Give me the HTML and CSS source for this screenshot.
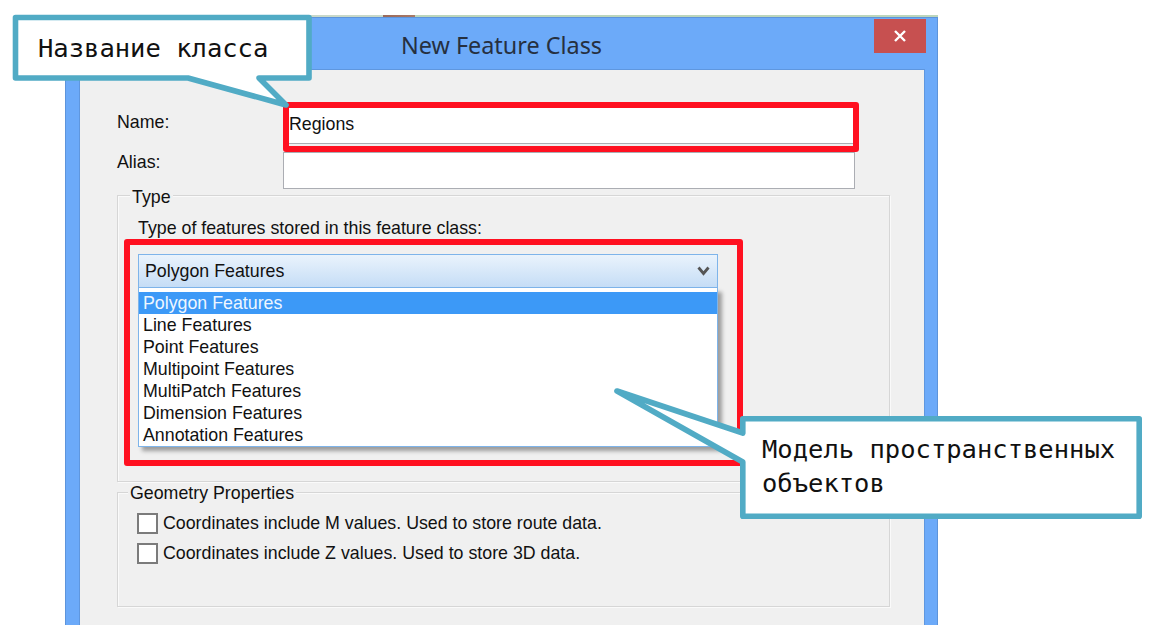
FILE: index.html
```html
<!DOCTYPE html>
<html lang="ru">
<head>
<meta charset="utf-8">
<title>New Feature Class</title>
<link rel="stylesheet" href="styles.css">
</head>
<body>
<div class="stage">
  <div class="backdrop-strip"></div>
  <div class="window">
    <div class="titlebar">
      <span class="title">New Feature Class</span>
      <div class="close">
        <svg width="14" height="12" viewBox="0 0 14 12"><path d="M2 1 L12 11 M12 1 L2 11" stroke="#fff" stroke-width="2.4" fill="none"/></svg>
      </div>
    </div>
    <div class="client">
      <div class="field-row">
        <span class="field-label">Name:</span>
        <div class="textbox">Regions</div>
      </div>
      <div class="field-row field-row--alias">
        <span class="field-label field-label--alias">Alias:</span>
        <div class="textbox"></div>
      </div>

      <div class="group group--type">
        <div class="legend legend--type">Type</div>
        <div class="group-caption">Type of features stored in this feature class:</div>
        <div class="combo">
          <span class="combo-value">Polygon Features</span>
          <svg class="chevron" width="13" height="10" viewBox="0 0 13 10"><polyline points="1.5,1.5 6.5,7.5 11.5,1.5" fill="none" stroke="#555" stroke-width="2.8"/></svg>
          <ul class="combo-list">
            <li class="combo-item combo-item--selected">Polygon Features</li>
            <li class="combo-item">Line Features</li>
            <li class="combo-item">Point Features</li>
            <li class="combo-item">Multipoint Features</li>
            <li class="combo-item">MultiPatch Features</li>
            <li class="combo-item">Dimension Features</li>
            <li class="combo-item">Annotation Features</li>
          </ul>
        </div>
      </div>

      <div class="group group--geom">
        <div class="legend legend--geom">Geometry Properties</div>
        <div class="check-list">
          <div class="check-row"><span class="checkbox"></span>Coordinates include M values. Used to store route data.</div>
          <div class="check-row"><span class="checkbox"></span>Coordinates include Z values. Used to store 3D data.</div>
        </div>
      </div>
    </div>
  </div>

  <div class="highlight highlight--name"></div>
  <div class="highlight highlight--type"></div>

  <div class="callout callout--class">
    <svg class="callout-shape" width="298" height="65"><path d="M2.5 2.5 H296 V63 H246 L273 90 L175 63 H2.5 Z" fill="#fff" stroke="#51abc5" stroke-width="5.6" stroke-linejoin="round"/></svg>
    <div class="callout-text">Название класса</div>
  </div>

  <div class="callout callout--model">
    <svg class="callout-shape" width="402" height="103"><path d="M2.8 2.8 H399.2 V100.2 H2.8 V46 L-123 -25 L2.8 17 Z" fill="#fff" stroke="#51abc5" stroke-width="5.6" stroke-linejoin="round"/></svg>
    <div class="callout-text">Модель пространственных<br>объектов</div>
  </div>
</div>
</body>
</html>
```

FILE: styles.css
```css
* { box-sizing: border-box; }

html, body {
  margin: 0;
  padding: 0;
  background: #fff;
}

body {
  font-family: "Liberation Sans", Arial, sans-serif;
  font-size: 17.8px;
  line-height: 20px;
  color: #111;
}

.stage {
  position: relative;
  width: 1162px;
  height: 642px;
  overflow: hidden;
  padding-top: 15px;
}

.backdrop-strip {
  width: 873px;
  height: 2px;
  margin-left: 65px;
  background: linear-gradient(90deg, #c9d9c9 0, #c9d9c9 318px, #9a6a5a 318px, #a87a68 350px, #bcd6bc 350px, #bcd6bc 100%);
}

.window {
  width: 873px;
  height: 608px;
  margin-left: 65px;
  background: #6caaf9;
  border: 1px solid #5d94db;
  border-bottom: 0;
  display: flex;
  flex-direction: column;
}

.titlebar {
  height: 51px;
  flex: none;
  display: grid;
  grid-template-columns: 1fr auto 1fr;
}

.title {
  grid-column: 2;
  align-self: center;
  margin-top: 3px;
  font-family: "Noto Sans", "Open Sans", sans-serif;
  font-size: 23.4px;
  line-height: 30px;
  color: #263040;
}

.close {
  grid-column: 3;
  justify-self: end;
  align-self: start;
  margin: 1px 11px 0 0;
  width: 52px;
  height: 34px;
  background: #c75050;
  display: flex;
  align-items: center;
  justify-content: center;
}

.client {
  flex: 1;
  margin: 0 12px 0 13px;
  background: #f0f0f0;
  border: 1px solid #5f97df;
  border-bottom: 0;
  padding: 37px 0 0 37px;
}

.field-row {
  display: flex;
  align-items: flex-start;
}

.field-row--alias {
  margin-top: 8px;
}

.field-label {
  width: 166px;
  padding-top: 5px;
}

.field-label--alias {
  padding-top: 0;
}

.textbox {
  width: 572px;
  height: 37px;
  background: #fff;
  border: 1px solid #abadb3;
  padding-left: 5px;
  line-height: 33px;
}

.group {
  width: 773px;
  border: 1px solid #d6d6d6;
  box-shadow: 1px 1px 0 #fafafa, inset 1px 1px 0 #fafafa;
}

.group--type {
  margin-top: 6px;
  height: 287px;
}

.group--geom {
  margin-top: 10px;
  height: 115px;
}

.legend {
  width: fit-content;
  background: #f0f0f0;
  padding: 0 2px;
}

.legend--type {
  margin: -9px 0 0 12px;
}

.legend--geom {
  margin: -10px 0 0 10px;
}

.group-caption {
  margin: 11px 0 0 20px;
}

.combo {
  position: relative;
  margin: 16px 0 0 20px;
  width: 580px;
  height: 34px;
  border: 1px solid #7eb4ea;
  background: linear-gradient(#eaf3fc, #c5ddf6);
  display: flex;
  align-items: center;
  padding-left: 6px;
}

.chevron {
  margin-left: auto;
  margin-right: 7px;
}

.combo-list {
  position: absolute;
  top: 33px;
  left: -1px;
  width: 580px;
  margin: 0;
  padding: 4px 0 0;
  list-style: none;
  background: #fff;
  border: 1px solid #7eb4ea;
  border-top: 0;
  box-shadow: 4px 4px 4px rgba(0, 0, 0, 0.35);
}

.combo-item {
  height: 22px;
  line-height: 22px;
  padding-left: 4px;
}

.combo-item--selected {
  background: #3c99f7;
  color: #eef6ff;
}

.check-list {
  margin-top: 5px;
}

.check-row {
  display: flex;
  align-items: center;
  height: 30px;
  padding-left: 19px;
}

.checkbox {
  width: 21px;
  height: 21px;
  border: 2px solid #7b7b7b;
  background: #fff;
  margin-right: 5px;
  flex: none;
}

.highlight {
  position: absolute;
  border: 6px solid #ff1020;
  border-radius: 3px;
}

.highlight--name {
  left: 283px;
  top: 102px;
  width: 576px;
  height: 50px;
}

.highlight--type {
  left: 124px;
  top: 239px;
  width: 619px;
  height: 227px;
}

.callout {
  position: absolute;
}

.callout--class {
  left: 13px;
  top: 15px;
  width: 298px;
  height: 65px;
  padding: 18px 0 0 25px;
}

.callout--model {
  left: 740px;
  top: 416px;
  width: 402px;
  height: 103px;
  padding: 16px 0 0 22px;
}

.callout-shape {
  position: absolute;
  left: 0;
  top: 0;
  overflow: visible;
}

.callout-text {
  position: relative;
  font-family: "DejaVu Sans Mono", "Liberation Mono", monospace;
  font-size: 25.5px;
  line-height: 30px;
  color: #111;
  white-space: nowrap;
}

.callout--model .callout-text {
  line-height: 34px;
}
```
